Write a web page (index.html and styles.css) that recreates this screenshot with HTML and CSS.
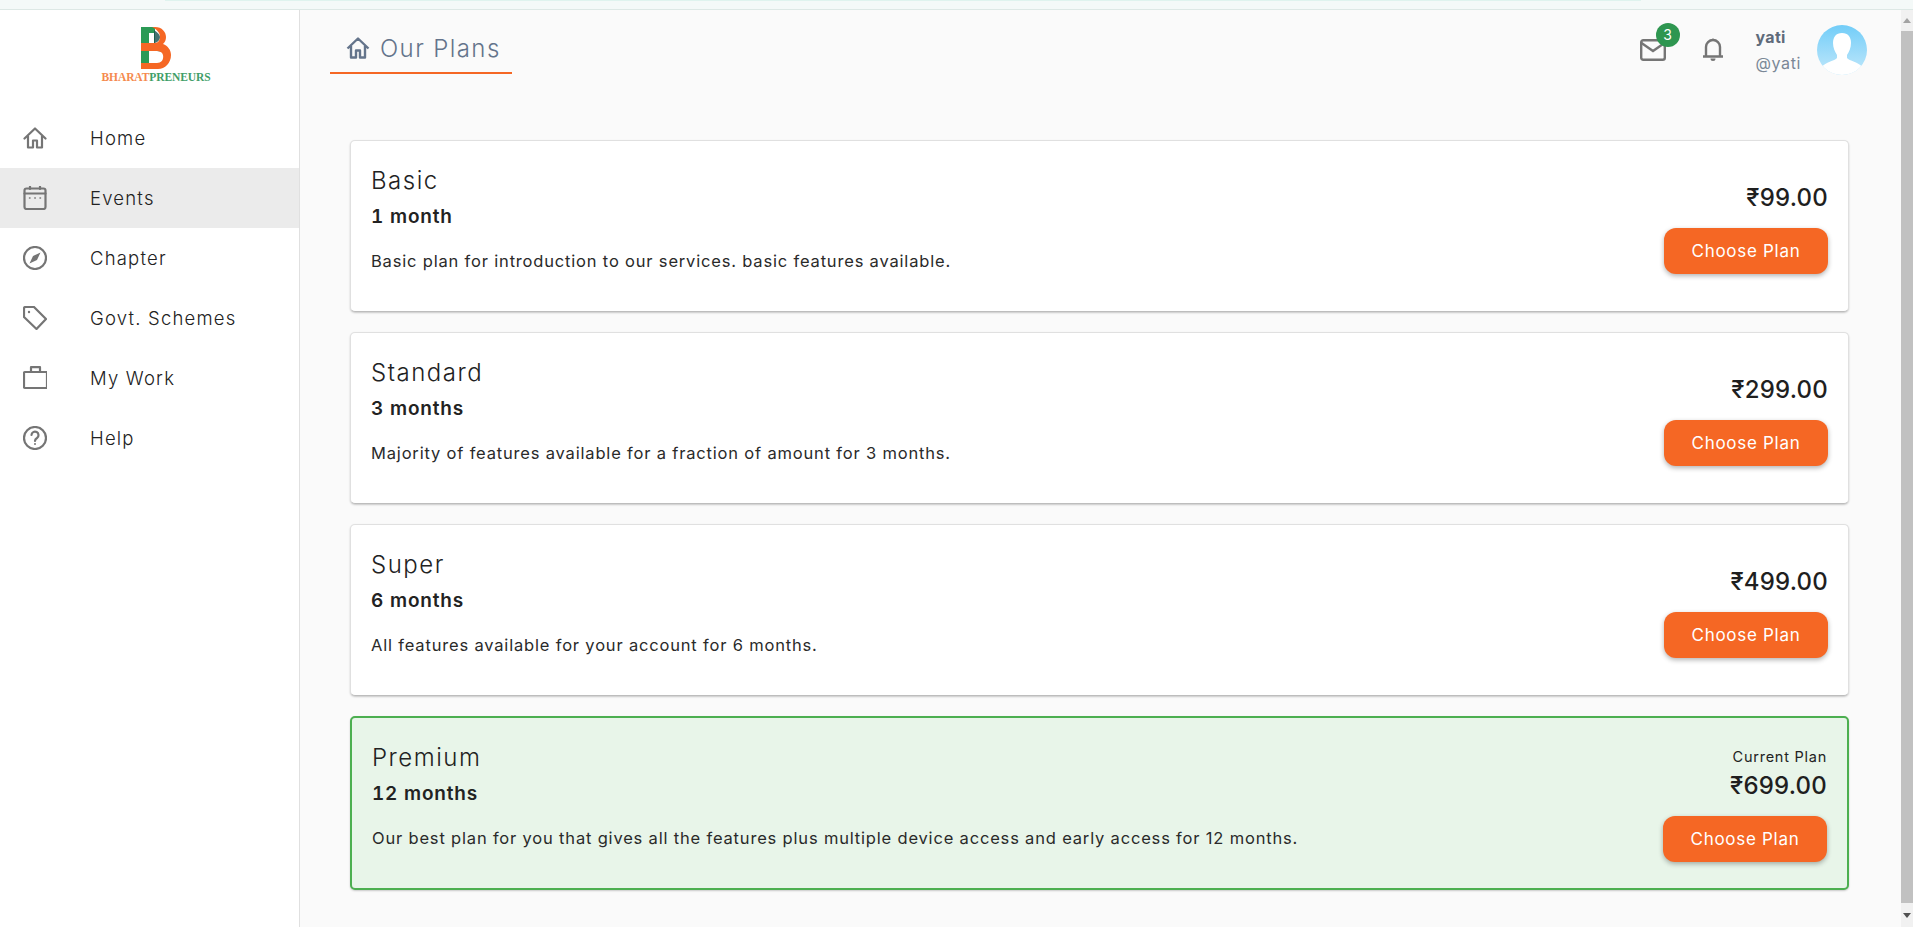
FILE: index.html
```html
<!DOCTYPE html>
<html lang="en">
<head>
<meta charset="utf-8">
<title>Our Plans</title>
<link rel="stylesheet" href="styles.css">
</head>
<body>
<div class="topstrip"><div class="topstrip-tint"></div></div>
<div class="app">
  <aside class="sidebar">
    <div class="logo">
      <svg class="logo-b" viewBox="0 0 30 42" width="30" height="42">
        <path fill="#2b9a55" d="M0 0H14V16H0Z"/>
        <path fill="#2b9a55" d="M0 24H8V36H0Z"/>
        <path fill="#fff" d="M8 6H13V16H8Z"/>
        <path fill="#17504f" d="M13 3Q19 7 19 10Q19 14 14 16H13Z" opacity=".8"/>
        <path fill="#17504f" d="M16 18H22L23 26Q20 24 16 24Z"/>
        <path fill="#f56724" d="M11 0H14C21 0 25 5 25 10C25 13 24 15 22 17C27 19 30 23 30 28C30 36 24 42 17 42H0V36H16C20 36 23 33 22 28C21 25 19 24 16 24H0V16H14C17 16 19 13 19 10C19 5 15 2 11 0Z"/>
      </svg>
      <div class="logo-text"><span class="logo-or">BHARAT</span><span class="logo-gr">PRENEURS</span></div>
    </div>
    <nav class="menu">
      <a class="menu-item">
        <svg class="ico" viewBox="0 0 24 24"><path d="M1.500 12.500 12 2.500l10.500 10M5 10v11.500h5v-7h4v7h5V10"/></svg>
        <span>Home</span>
      </a>
      <a class="menu-item active">
        <svg class="ico" viewBox="0 0 24 24"><rect x="1.500" y="2.500" width="21" height="20.500" rx="2"/><path d="M1.500 7.500h21M7 .5v2.500M17 .5v2.500"/><path class="dots" d="M6.500 12h.5M11.800 12h.5M17 12h.5"/></svg>
        <span>Events</span>
      </a>
      <a class="menu-item">
        <svg class="ico" viewBox="0 0 24 24"><circle cx="12" cy="12" r="11"/><path class="fill" d="M17.500 6.500 14 14 6.500 17.500 10 10Z"/></svg>
        <span>Chapter</span>
      </a>
      <a class="menu-item">
        <svg class="ico" viewBox="0 0 24 24"><path d="M1 2.500A1.500 1.500 0 0 1 2.500 1H11l12 12-9.500 10L1 11Z"/><circle class="fill" cx="6" cy="6" r="1.200"/></svg>
        <span>Govt. Schemes</span>
      </a>
      <a class="menu-item">
        <svg class="ico" viewBox="0 0 24 24"><rect x="1" y="6" width="23" height="16" rx="1"/><path d="M8 6V1.200h9V6"/></svg>
        <span>My Work</span>
      </a>
      <a class="menu-item">
        <svg class="ico" viewBox="0 0 24 24"><circle cx="12" cy="12" r="11"/><path d="M8.500 9a3.500 3.500 0 1 1 5.500 3c-1.300.8-2 1.400-2 3"/><circle class="fill" cx="12" cy="18" r="1"/></svg>
        <span>Help</span>
      </a>
    </nav>
  </aside>

  <main class="main">
    <header class="header">
      <div class="tab">
        <svg class="tab-ico" viewBox="0 0 24 24"><path d="M1.500 12.500 12 2.500l10.500 10M5 10v11.500h5v-7h4v7h5V10"/></svg>
        <span>Our Plans</span>
      </div>
      <div class="tools">
        <div class="mail">
          <svg class="tool-ico" viewBox="0 0 26 22"><rect x="1.200" y="1.200" width="23.600" height="19.600" rx="2"/><path d="M1.500 4 13 12 24.500 4"/></svg>
          <span class="badge">3</span>
        </div>
        <svg class="bell" viewBox="0 0 20 26"><path d="M3 20V11a7 7 0 0 1 14 0v9M0 20.500h20"/><path class="fill" d="M7.500 22.500h5a2.500 2.500 0 0 1-5 0ZM8.500 4a1.500 1.500 0 0 1 3 0Z"/></svg>
        <div class="user">
          <div class="user-name">yati</div>
          <div class="user-handle">@yati</div>
        </div>
        <div class="avatar">
          <svg viewBox="0 0 50 50" width="50" height="50">
            <path fill="#fff" d="M25 8c6 0 9 4 9 10 0 5-2 9-4 12v3c2 3 12 4 15 9-4 5-12 8-20 8s-16-3-20-8c3-5 13-6 15-9v-3c-2-3-4-7-4-12 0-6 3-10 9-10Z"/>
          </svg>
        </div>
      </div>
    </header>

    <section class="plans">
      <article class="plan">
        <div class="plan-info">
          <h2 class="plan-title">Basic</h2>
          <div class="plan-term">1 month</div>
          <p class="plan-desc">Basic plan for introduction to our services. basic features available.</p>
        </div>
        <div class="plan-buy">
          <div class="plan-price">₹99.00</div>
          <button class="choose">Choose Plan</button>
        </div>
      </article>
      <article class="plan">
        <div class="plan-info">
          <h2 class="plan-title">Standard</h2>
          <div class="plan-term">3 months</div>
          <p class="plan-desc">Majority of features available for a fraction of amount for 3 months.</p>
        </div>
        <div class="plan-buy">
          <div class="plan-price">₹299.00</div>
          <button class="choose">Choose Plan</button>
        </div>
      </article>
      <article class="plan">
        <div class="plan-info">
          <h2 class="plan-title">Super</h2>
          <div class="plan-term">6 months</div>
          <p class="plan-desc">All features available for your account for 6 months.</p>
        </div>
        <div class="plan-buy">
          <div class="plan-price">₹499.00</div>
          <button class="choose">Choose Plan</button>
        </div>
      </article>
      <article class="plan current">
        <div class="plan-info">
          <h2 class="plan-title">Premium</h2>
          <div class="plan-term">12 months</div>
          <p class="plan-desc">Our best plan for you that gives all the features plus multiple device access and early access for 12 months.</p>
        </div>
        <div class="plan-buy">
          <div class="plan-note">Current Plan</div>
          <div class="plan-price">₹699.00</div>
          <button class="choose">Choose Plan</button>
        </div>
      </article>
    </section>
  </main>

  <div class="scrollbar">
    <div class="sb-btn"><i class="arrow-up"></i></div>
    <div class="sb-thumb"></div>
    <div class="sb-btn"><i class="arrow-down"></i></div>
  </div>
</div>
</body>
</html>
```

FILE: styles.css
```css
* { box-sizing: border-box; }
html, body { height: 100%; }
body {
  margin: 0;
  overflow: hidden;
  display: flex;
  flex-direction: column;
  background: #fafafa;
  color: #222;
  font-family: Inter, "Noto Sans", "Liberation Sans", sans-serif;
  font-weight: 300;
}
.topstrip {
  height: 10px;
  flex: none;
  background: #f4f9f8;
  border-bottom: 1px solid #dde8e5;
  padding-left: 165px;
  padding-right: 272px;
}
.topstrip-tint { height: 1px; background: #dff3ee; }
.app { flex: 1; display: flex; min-height: 0; }

.sidebar {
  width: 300px;
  flex: none;
  background: #fff;
  border-right: 1px solid #e0e0e0;
}
.logo {
  height: 98px;
  padding-top: 17px;
  display: flex;
  flex-direction: column;
  align-items: center;
}
.logo-b { display: block; margin-left: 12px; }
.logo-text {
  margin-top: 1px;
  margin-left: 13px;
  font-family: "Liberation Serif", serif;
  font-weight: 700;
  font-size: 11.500px;
  line-height: 13px;
  letter-spacing: -.1px;
  transform: scaleY(1.15);
}
.logo-or { color: #f58a4e; }
.logo-gr { color: #3f9e68; }

.menu-item {
  display: flex;
  align-items: center;
  height: 60px;
  padding-left: 23px;
  gap: 43px;
  font-size: 18.500px;
  letter-spacing: 1.200px;
  color: #222;
}
.menu-item.active { background: #ebebeb; }
.ico {
  width: 24px;
  height: 24px;
  flex: none;
  fill: none;
  stroke: #757575;
  stroke-width: 2.200;
  stroke-linejoin: round;
  stroke-linecap: round;
}
.ico .fill { fill: #757575; stroke: none; }
.ico .dots { stroke-width: 1.500; }

.main { flex: 1; min-width: 0; display: flex; flex-direction: column; }
.header { display: flex; justify-content: space-between; height: 64px; flex: none; padding: 0 34px 0 30px; }
.tab {
  width: 182px;
  display: flex;
  align-items: center;
  gap: 10px;
  padding-left: 16px;
  padding-top: 14px;
  border-bottom: 2px solid #f56724;
  font-size: 24px;
  letter-spacing: 1.400px;
  color: #64748b;
}
.tab-ico {
  width: 24px;
  height: 24px;
  flex: none;
  fill: none;
  stroke: #64748b;
  stroke-width: 2.400;
  stroke-linejoin: round;
}
.tools { display: flex; align-items: center; height: 50px; margin-top: 15px; }
.mail { position: relative; width: 26px; height: 22px; }
.tool-ico {
  display: block;
  width: 26px;
  height: 22px;
  fill: none;
  stroke: #757575;
  stroke-width: 2.400;
}
.badge {
  position: absolute;
  left: 16px;
  top: -16px;
  width: 24px;
  height: 24px;
  border-radius: 50%;
  background: #2e9650;
  color: #fff;
  font-size: 14px;
  font-weight: 400;
  line-height: 24px;
  text-align: center;
}
.bell {
  width: 20px;
  height: 26px;
  margin-left: 37px;
  margin-top: -2px;
  fill: none;
  stroke: #757575;
  stroke-width: 2.400;
}
.bell .fill { fill: #757575; stroke: none; }
.user { margin-left: 33px; margin-right: 16px; }
.user-name { font-size: 16px; font-weight: 700; line-height: 26px; letter-spacing: .3px; color: #5f6b7a; }
.user-handle { font-size: 16px; font-weight: 400; line-height: 26px; letter-spacing: .6px; color: #7a8897; }
.avatar {
  width: 50px;
  height: 50px;
  border-radius: 50%;
  overflow: hidden;
  background: linear-gradient(#72cdf8, #c2e8fb);
}
.avatar svg { display: block; }

.plans {
  display: flex;
  flex-direction: column;
  gap: 20px;
  padding: 66px 52px 0 50px;
}
.plan {
  display: flex;
  justify-content: space-between;
  align-items: center;
  background: #fff;
  border: 1px solid #e0e0e0;
  border-bottom-color: #bdbdbd;
  border-radius: 5px;
  box-shadow: 0 1px 2px rgba(0, 0, 0, .2);
  padding: 0 20px 0 20px;
}
.plan.current {
  background: #e8f5e9;
  border: 2px solid #4caf50;
}
.plan-info { padding: 21px 0 38px; }
.plan-title { margin: 0; font-size: 24px; font-weight: 300; line-height: 38px; letter-spacing: 1.500px; color: #222; }
.plan-term { margin-top: 5px; font-size: 19px; font-weight: 600; line-height: 24px; letter-spacing: .8px; font-variant-numeric: tabular-nums; color: #222; }
.plan-desc { margin: 20px 0 0; font-size: 16.500px; font-weight: 400; line-height: 24px; letter-spacing: .82px; color: #2a2a2a; }
.plan-buy { display: flex; flex-direction: column; align-items: flex-end; padding-top: 5px; }
.plan.current .plan-buy { padding-top: 3px; }
.plan-note { font-size: 14.500px; font-weight: 400; line-height: 18px; letter-spacing: .75px; margin-bottom: 5px; color: #222; }
.plan-price { font-size: 24px; font-weight: 500; line-height: 30px; letter-spacing: .2px; color: #1f1f1f; }
.choose {
  width: 164px;
  height: 46px;
  margin-top: 15px;
  border: 0;
  border-radius: 12px;
  background: #f56724;
  color: #fff;
  font-family: inherit;
  font-size: 17px;
  font-weight: 400;
  letter-spacing: .7px;
  box-shadow: 0 2px 5px rgba(0, 0, 0, .3);
}

.scrollbar {
  width: 12px;
  flex: none;
  display: flex;
  flex-direction: column;
  background: #f1f1f1;
}
.sb-btn { height: 21px; flex: none; display: flex; align-items: center; justify-content: center; }
.sb-thumb { flex: 1; background: #c1c1c1; }
.sb-btn:last-child { height: 24px; }
.arrow-up, .arrow-down { width: 0; height: 0; border-left: 4px solid transparent; border-right: 4px solid transparent; }
.arrow-up { border-bottom: 5px solid #a3a3a3; }
.arrow-down { border-top: 5px solid #505050; }
```
